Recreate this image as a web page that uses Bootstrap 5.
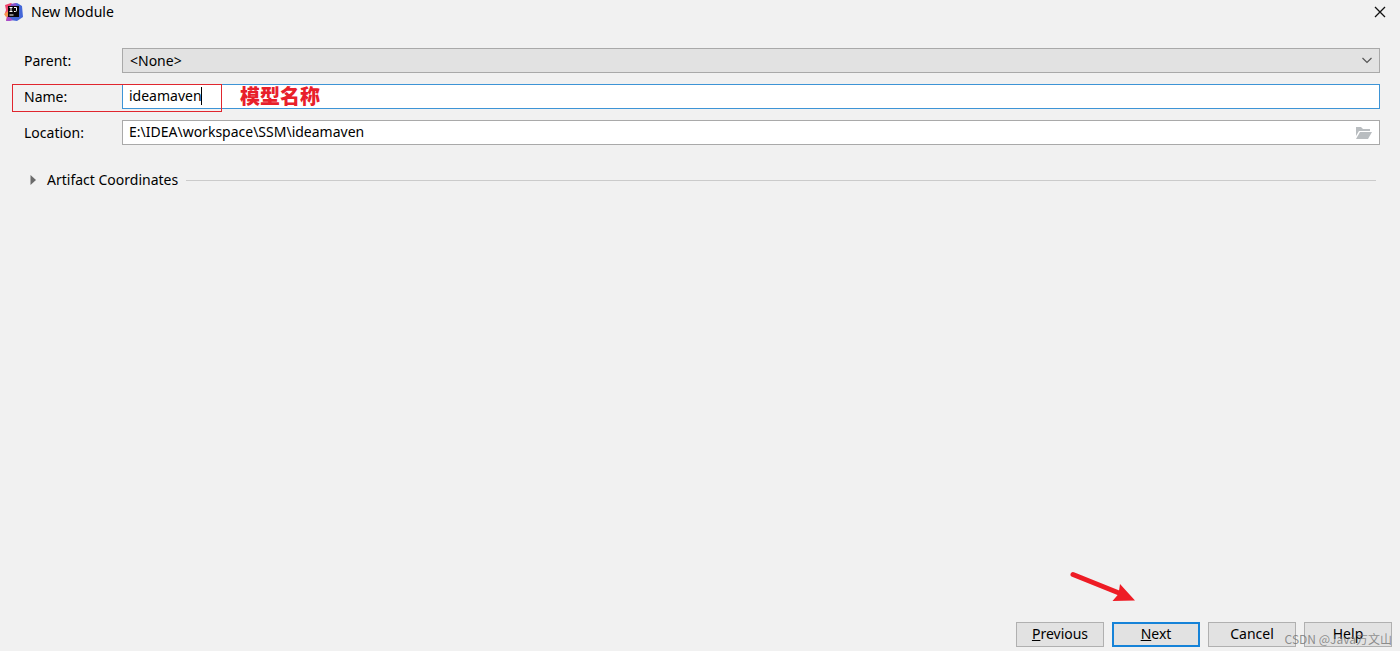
<!DOCTYPE html>
<html lang="en">
<head>
<meta charset="utf-8">
<meta name="viewport" content="width=device-width, initial-scale=1">
<title>New Module</title>
<link href="https://cdn.jsdelivr.net/npm/bootstrap@5.3.0/dist/css/bootstrap.min.css" rel="stylesheet">
<style>
  body { background: #f1f1f1; color: #000; font-family: "Noto Sans", "Noto Sans CJK SC", sans-serif; font-size: 14px; line-height: 20px; }
  svg { display: block; }
  .title-bar { height: 24px; padding: 0 12px 0 4px; }
  .module-form { padding: 24px 20px 0 24px; gap: 11px; }
  .form-line { height: 25px; }
  .field-label { width: 98px; }
  .field { height: 25px; padding: 0 6px 2px; border: 1px solid #a9a9a9; border-radius: 0; background: #fff; color: #000; font-size: 14px; line-height: 20px; box-shadow: none; }
  select.field { background: #e2e2e2; padding: 0 7px; }
  .field:focus { color: #000; box-shadow: none; }
  .field-active, .field-active:focus { border-color: #3d94d6; }
  .field-icon { top: 0; bottom: 0; right: 7px; }
  .caret-bar { left: 79px; top: 3px; width: 1px; height: 18px; background: #000; }
  .note-frame { left: -12px; top: 0; width: 210px; height: 28px; border: 1px solid #e0262e; z-index: 2; }
  .note-text { left: 118px; top: 0; color: #e8202a; font: 900 20px/24px "Noto Sans CJK SC", sans-serif; white-space: nowrap; z-index: 2; }
  .coords { padding: 9px 4px 0 5px; }
  .rule-line { height: 1px; background: #cbcbcb; }
  .dialog-footer { gap: 8px; padding: 0 8px 4px; }
  .dialog-btn { width: 88px; height: 25px; padding: 0 0 2px; border: 1px solid #b0b0b0; border-radius: 0; background: #e2e2e2; color: #000; font-size: 14px; line-height: 20px; }
  .dialog-btn.main { border: 2px solid #1683d8; }
  .pointer { right: 265px; bottom: 49px; }
  .watermark { right: 8px; bottom: 3px; color: rgba(110, 110, 110, .75); font: 12px/18px "Noto Sans CJK SC", sans-serif; pointer-events: none; white-space: nowrap; }
</style>
</head>
<body>
<div class="d-flex flex-column min-vh-100">
  <header class="title-bar d-flex align-items-center justify-content-between">
    <div class="d-flex align-items-center gap-2">
      <svg width="19" height="20" viewBox="0 0 19 20" aria-hidden="true">
        <path d="M1 3 7 1l4 3-3 11-6 4 1-6-2-2 1-3z" fill="#f0446c"/>
        <path d="M0 12l4-3 1 5-3 1z" fill="#f7924a"/>
        <path d="M9 2l4-1 5 3 1 11-6 4-7-1-3-2 6-6z" fill="#4467d8"/>
        <path d="M2 19l2-5 5 4-3 1z" fill="#a64cc9"/>
        <path d="M7 2l5-1 1 4H6z" fill="#8754c8"/>
        <path d="M4 4h11v11H4z" fill="#080508"/>
        <path d="M5.500 5.500h3M7 5.500v4M5.500 9.500h3M10 5.500h2.500v3q0 1-1 1H10M5.500 13h4" fill="none" stroke="#fff"/>
      </svg>
      <span>New Module</span>
    </div>
    <button type="button" class="border-0 bg-transparent p-0" aria-label="Close">
      <svg width="16" height="16" viewBox="0 0 16 16"><path d="M3 3l10 10M13 3 3 13" stroke="#111" stroke-width="1.300"/></svg>
    </button>
  </header>

  <main class="flex-grow-1">
    <form class="module-form d-flex flex-column">
      <div class="form-line d-flex align-items-center">
        <label class="field-label flex-shrink-0" for="parent">Parent:</label>
        <div class="position-relative flex-grow-1">
          <select class="form-select field" id="parent"><option>&lt;None&gt;</option></select>
          <span class="field-icon position-absolute d-flex align-items-center pe-none">
            <svg width="12" height="12" viewBox="0 0 12 12"><path d="M1.500 3 6 7.500 10.500 3" fill="none" stroke="#555" stroke-width="1.200"/></svg>
          </span>
        </div>
      </div>
      <div class="form-line d-flex align-items-center position-relative">
        <label class="field-label flex-shrink-0" for="name">Name:</label>
        <div class="position-relative flex-grow-1">
          <input class="form-control field field-active" id="name" type="text" value="ideamaven">
          <span class="caret-bar position-absolute"></span>
          <span class="note-text position-absolute pe-none" lang="zh-CN">模型名称</span>
        </div>
        <span class="note-frame position-absolute pe-none"></span>
      </div>
      <div class="form-line d-flex align-items-center">
        <label class="field-label flex-shrink-0" for="location">Location:</label>
        <div class="position-relative flex-grow-1">
          <input class="form-control field" id="location" type="text" value="E:\IDEA\workspace\SSM\ideamaven">
          <button type="button" class="field-icon position-absolute d-flex align-items-center border-0 bg-transparent p-0" aria-label="Browse">
            <svg width="18" height="14" viewBox="0 0 18 14"><path d="M1 1h5l2 2h7v2H4L1 10z" fill="#b9bdc0"/><path d="M5 6h12l-4 7H1z" fill="#b9bdc0"/></svg>
          </button>
        </div>
      </div>
    </form>
    <section class="module-form pt-0">
      <div class="coords d-flex align-items-center mt-3">
        <button type="button" class="d-flex align-items-center border-0 bg-transparent p-0 text-reset" aria-expanded="false">
          <svg class="me-2" width="10" height="12" viewBox="0 0 10 12"><path d="M1.500 1 7 6l-5.500 5z" fill="#6b6b6b"/></svg>
          Artifact Coordinates
        </button>
        <span class="rule-line flex-grow-1 ms-2"></span>
      </div>
    </section>
  </main>

  <footer class="dialog-footer d-flex justify-content-end position-relative">
    <svg class="pointer position-absolute" width="66" height="34" viewBox="0 0 66 34" aria-hidden="true">
      <path d="M4 6.500 50 25" stroke="#ee1c25" stroke-width="5" stroke-linecap="round"/>
      <path d="M51 16 66 32.500 43.500 33 49.500 26z" fill="#ee1c25"/>
    </svg>
    <button type="button" class="btn dialog-btn"><u>P</u>revious</button>
    <button type="button" class="btn dialog-btn main"><u>N</u>ext</button>
    <button type="button" class="btn dialog-btn">Cancel</button>
    <button type="button" class="btn dialog-btn">Help</button>
    <span class="watermark position-absolute" lang="zh-CN">CSDN @Java方文山</span>
  </footer>
</div>
<script src="https://cdn.jsdelivr.net/npm/bootstrap@5.3.0/dist/js/bootstrap.bundle.min.js"></script>
</body>
</html>
